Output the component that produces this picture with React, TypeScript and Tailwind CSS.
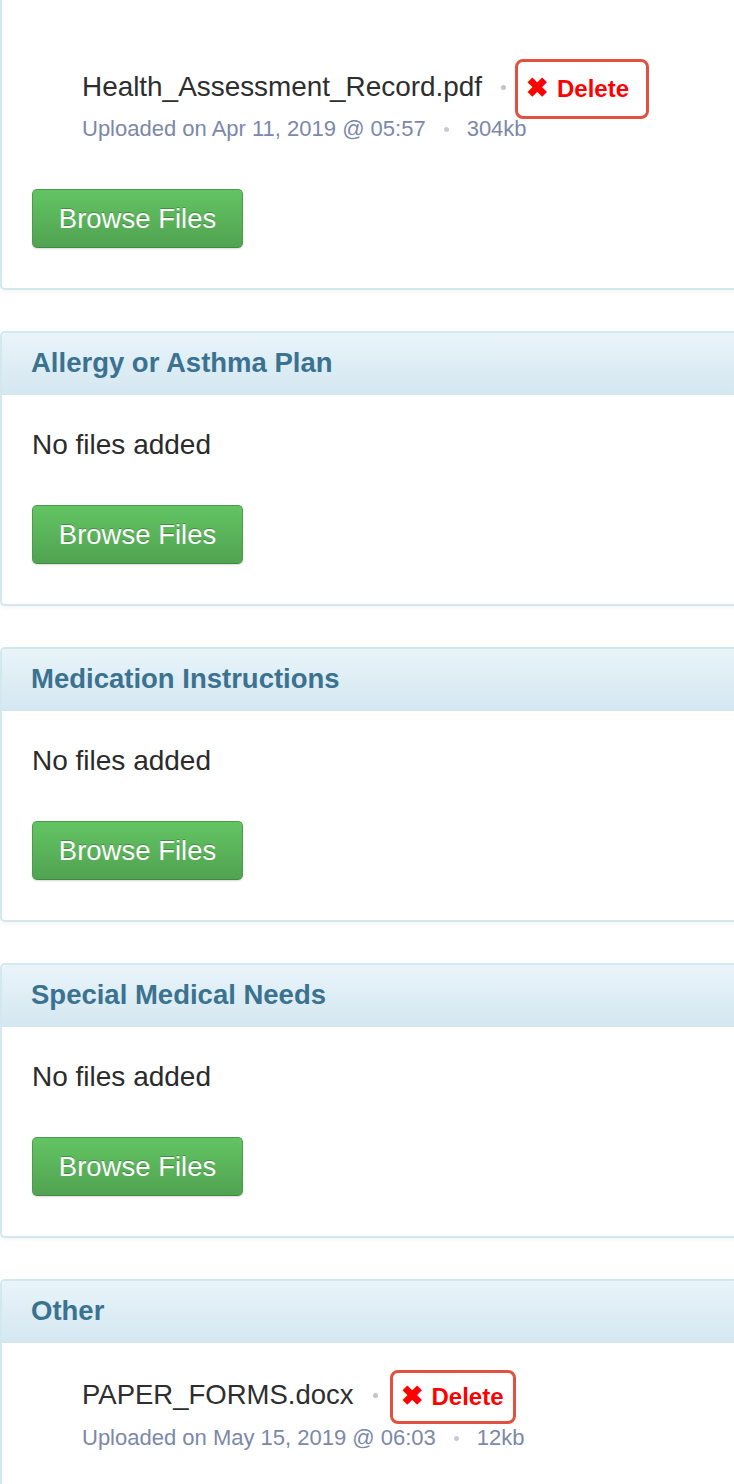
import React from "react";

const font = { fontFamily: '"Liberation Sans", Arial, Helvetica, sans-serif' };

function BrowseButton() {
  return (
    <button className="flex h-[59px] w-[211px] items-center justify-center rounded-[5px] border border-[#4d9a4d] border-b-[#3f8a3f] bg-gradient-to-b from-[#63c463] to-[#51a351] text-[27.5px] text-white shadow-[0_1px_2px_rgba(0,0,0,0.15)] [text-shadow:0_-1px_0_rgba(0,0,0,0.25)]">
      Browse Files
    </button>
  );
}

function Dot({ className = "" }: { className?: string }) {
  return <span className={`inline-block h-[5px] w-[5px] shrink-0 rounded-full bg-[#c4c4c4] ${className}`} />;
}

function DeleteBox({ w, h }: { w: string; h: string }) {
  return (
    <span
      className={`inline-flex shrink-0 items-center rounded-[8px] border-[3px] border-[#e2503f] pl-[8px] text-[24px] font-bold text-[#ff0000] ${w} ${h}`}
    >
      <span className="mr-[8px] mt-[-2px] text-[27px] leading-none">✖</span>
      Delete
    </span>
  );
}

function FileItem({
  name,
  nameSize,
  date,
  size,
  boxW,
  boxH,
  gapAfterName,
  metaMt,
}: {
  name: string;
  nameSize: string;
  date: string;
  size: string;
  boxW: string;
  boxH: string;
  gapAfterName: string;
  metaMt: string;
}) {
  return (
    <div className="pl-[50px]">
      <div className="flex items-center">
        <span className={`mt-[-4px] whitespace-nowrap leading-[30px] text-[#2e2e2e] ${nameSize}`}>{name}</span>
        <Dot className={`ml-[19px] ${gapAfterName} mt-[-4px]`} />
        <DeleteBox w={boxW} h={boxH} />
      </div>
      <div className={`flex items-center whitespace-nowrap text-[22px] leading-[24px] text-[#7c88aa] ${metaMt}`}>
        <span>{date}</span>
        <Dot className="mx-[18px] bg-[#c8cbd4]" />
        <span>{size}</span>
      </div>
    </div>
  );
}

function Header({ title }: { title: string }) {
  return (
    <div className="flex h-[62px] items-center rounded-t-[4px] bg-gradient-to-b from-[#e9f4fa] to-[#d4e7f0] px-[29px]">
      <span className="mt-[-2px] text-[27.5px] font-bold text-[#3b7290]">{title}</span>
    </div>
  );
}

function EmptyCard({ title }: { title: string }) {
  return (
    <div className="w-[780px] rounded-[5px] border-2 border-[#d3e7ef] bg-white shadow-[0_2px_3px_rgba(0,0,0,0.04)]">
      <Header title={title} />
      <div className="px-[30px] pb-[40px] pt-[32px]">
        <div className="text-[28px] leading-[36px] text-[#2b2b2b]">No files added</div>
        <div className="mt-[42px]">
          <BrowseButton />
        </div>
      </div>
    </div>
  );
}

export default function App() {
  return (
    <div className="h-[1484px] w-[734px] overflow-hidden bg-white" style={font}>
      <div className="flex flex-col gap-[41px]">
        {/* Card 1 (top cut off) */}
        <div className="mt-[-21px] w-[780px] rounded-[5px] border-2 border-[#d3e7ef] bg-white shadow-[0_2px_3px_rgba(0,0,0,0.04)]">
          <div className="px-[30px] pb-[40px] pt-[78px]">
            <FileItem
              name="Health_Assessment_Record.pdf"
              nameSize="text-[27.9px]"
              date="Uploaded on Apr 11, 2019 @ 05:57"
              size="304kb"
              boxW="w-[134px]"
              boxH="h-[60px]"
              gapAfterName="mr-[9px]"
              metaMt="mt-[-2px]"
            />
            <div className="mt-[48px]">
              <BrowseButton />
            </div>
          </div>
        </div>

        <EmptyCard title="Allergy or Asthma Plan" />
        <EmptyCard title="Medication Instructions" />
        <EmptyCard title="Special Medical Needs" />

        {/* Card 5 */}
        <div className="w-[780px] rounded-[5px] border-2 border-[#d3e7ef] bg-white">
          <Header title="Other" />
          <div className="px-[30px] pb-[40px] pt-[27px]">
            <FileItem
              name="PAPER_FORMS.docx"
              nameSize="text-[27.5px]"
              date="Uploaded on May 15, 2019 @ 06:03"
              size="12kb"
              boxW="w-[126px]"
              boxH="h-[54px]"
              gapAfterName="mr-[12px]"
              metaMt="mt-[2px]"
            />
          </div>
        </div>
      </div>
    </div>
  );
}
